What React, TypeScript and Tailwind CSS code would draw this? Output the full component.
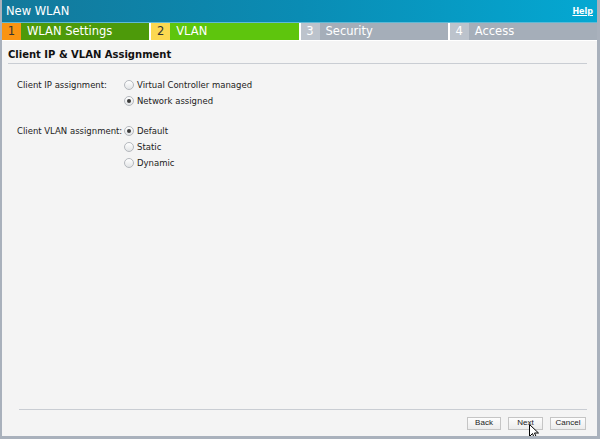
import { FC } from 'react';

interface RadioProps {
    label: string;
    checked?: boolean;
}

const Radio: FC<RadioProps> = ({ label, checked }) => {
    return (
        <div className="flex items-center h-[16px]">
            <span className="w-[10px] h-[10px] rounded-full border border-[#b4b8bd] bg-[linear-gradient(#ffffff,#e2e4e6)] flex items-center justify-center">
                {checked ? <span className="w-[4px] h-[4px] rounded-full bg-[#3a3a3a]" /> : null}
            </span>
            <span className="ml-[3px] text-[8.5px] text-[#222]">{label}</span>
        </div>
    );
};

interface TabProps {
    num: string;
    title: string;
    numBg: string;
    bg: string;
    numText: string;
}

const Tab: FC<TabProps> = ({ num, title, numBg, bg, numText }) => (
    <div className="flex flex-1 h-full">
        <div className={'w-[19px] flex items-center justify-center text-[11.5px] ' + numBg + ' ' + numText}>{num}</div>
        <div className={'flex-1 flex items-center pl-[6px] text-[11.5px] text-white ' + bg}>{title}</div>
    </div>
);

const App: FC = () => {
    return (
        <div className="w-[600px] h-[439px] relative flex flex-col bg-[#f4f4f4] border-l-[2px] border-r-[3px] border-b-[3px] border-[#a9b1bc] overflow-hidden font-['DejaVu_Sans',sans-serif]">
            {/* title bar */}
            <div className="h-[23px] shrink-0 flex items-center justify-between pl-[4px] pr-[4px] pt-[2px] bg-[linear-gradient(90deg,#13799b,#0a8cb4_50%,#04a8d2)] border-b border-[#5fb9d6]">
                <span className="text-white text-[11.5px]">New WLAN</span>
                <a className="text-white text-[8px] underline font-bold">Help</a>
            </div>
            {/* wizard steps */}
            <div className="h-[18px] shrink-0 flex gap-[2px] bg-white pb-[1px]">
                <Tab num="1" title="WLAN Settings" numBg="bg-[#fa9412]" bg="bg-[#4d9a0a]" numText="text-[#333]" />
                <Tab num="2" title="VLAN" numBg="bg-[#fbd850]" bg="bg-[#5ec50d]" numText="text-[#333]" />
                <Tab num="3" title="Security" numBg="bg-[#bcc3cc]" bg="bg-[#a5aeb9]" numText="text-white" />
                <Tab num="4" title="Access" numBg="bg-[#bcc3cc]" bg="bg-[#a5aeb9]" numText="text-white" />
            </div>
            {/* content */}
            <div className="flex-1 flex flex-col px-[6px]">
                <div className="mt-[8px] pb-[2px] border-b border-[#c9cdd3] mr-[4px]">
                    <h1 className="text-[10px] font-bold text-[#111] leading-[12px]">Client IP &amp; VLAN Assignment</h1>
                </div>
                <div className="mt-[13px] pl-[9px] flex flex-col">
                    <div className="flex">
                        <div className="w-[107px] h-[16px] flex items-center text-[8.5px] text-[#222]">Client IP assignment:</div>
                        <div className="flex flex-col">
                            <Radio label="Virtual Controller managed" />
                            <Radio label="Network assigned" checked />
                        </div>
                    </div>
                    <div className="flex mt-[14px]">
                        <div className="w-[107px] h-[16px] flex items-center text-[8.5px] text-[#222]">Client VLAN assignment:</div>
                        <div className="flex flex-col">
                            <Radio label="Default" checked />
                            <Radio label="Static" />
                            <Radio label="Dynamic" />
                        </div>
                    </div>
                </div>
                <div className="flex-1" />
                <div className="ml-[11px] mr-[4px] border-t border-[#c9cdd3] h-[27px] flex items-center justify-end gap-[7px] pr-[1px]">
                    <button className="w-[34px] h-[13px] border border-[#c5c5c5] bg-[linear-gradient(#fdfdfd,#ececec)] text-[8px] text-[#222] font-['Liberation_Sans',sans-serif] leading-none">Back</button>
                    <button className="relative w-[35px] h-[13px] border border-[#c5c5c5] bg-[linear-gradient(#fdfdfd,#ececec)] text-[8px] text-[#222] font-['Liberation_Sans',sans-serif] leading-none">
                        Next
                        <svg className="absolute left-[20px] top-[6px]" width="11" height="16" viewBox="0 0 11 16">
                            <path d="M0.5 0.5 L0.5 12.5 L3.5 9.5 L5.5 14.5 L7.5 13.5 L5.5 9 L9.5 9 Z" fill="white" stroke="black" strokeWidth="1" strokeLinejoin="round" />
                        </svg>
                    </button>
                    <button className="w-[36px] h-[13px] border border-[#c5c5c5] bg-[linear-gradient(#fdfdfd,#ececec)] text-[8px] text-[#222] font-['Liberation_Sans',sans-serif] leading-none">Cancel</button>
                </div>
            </div>
        </div>
    );
};

export default App;
